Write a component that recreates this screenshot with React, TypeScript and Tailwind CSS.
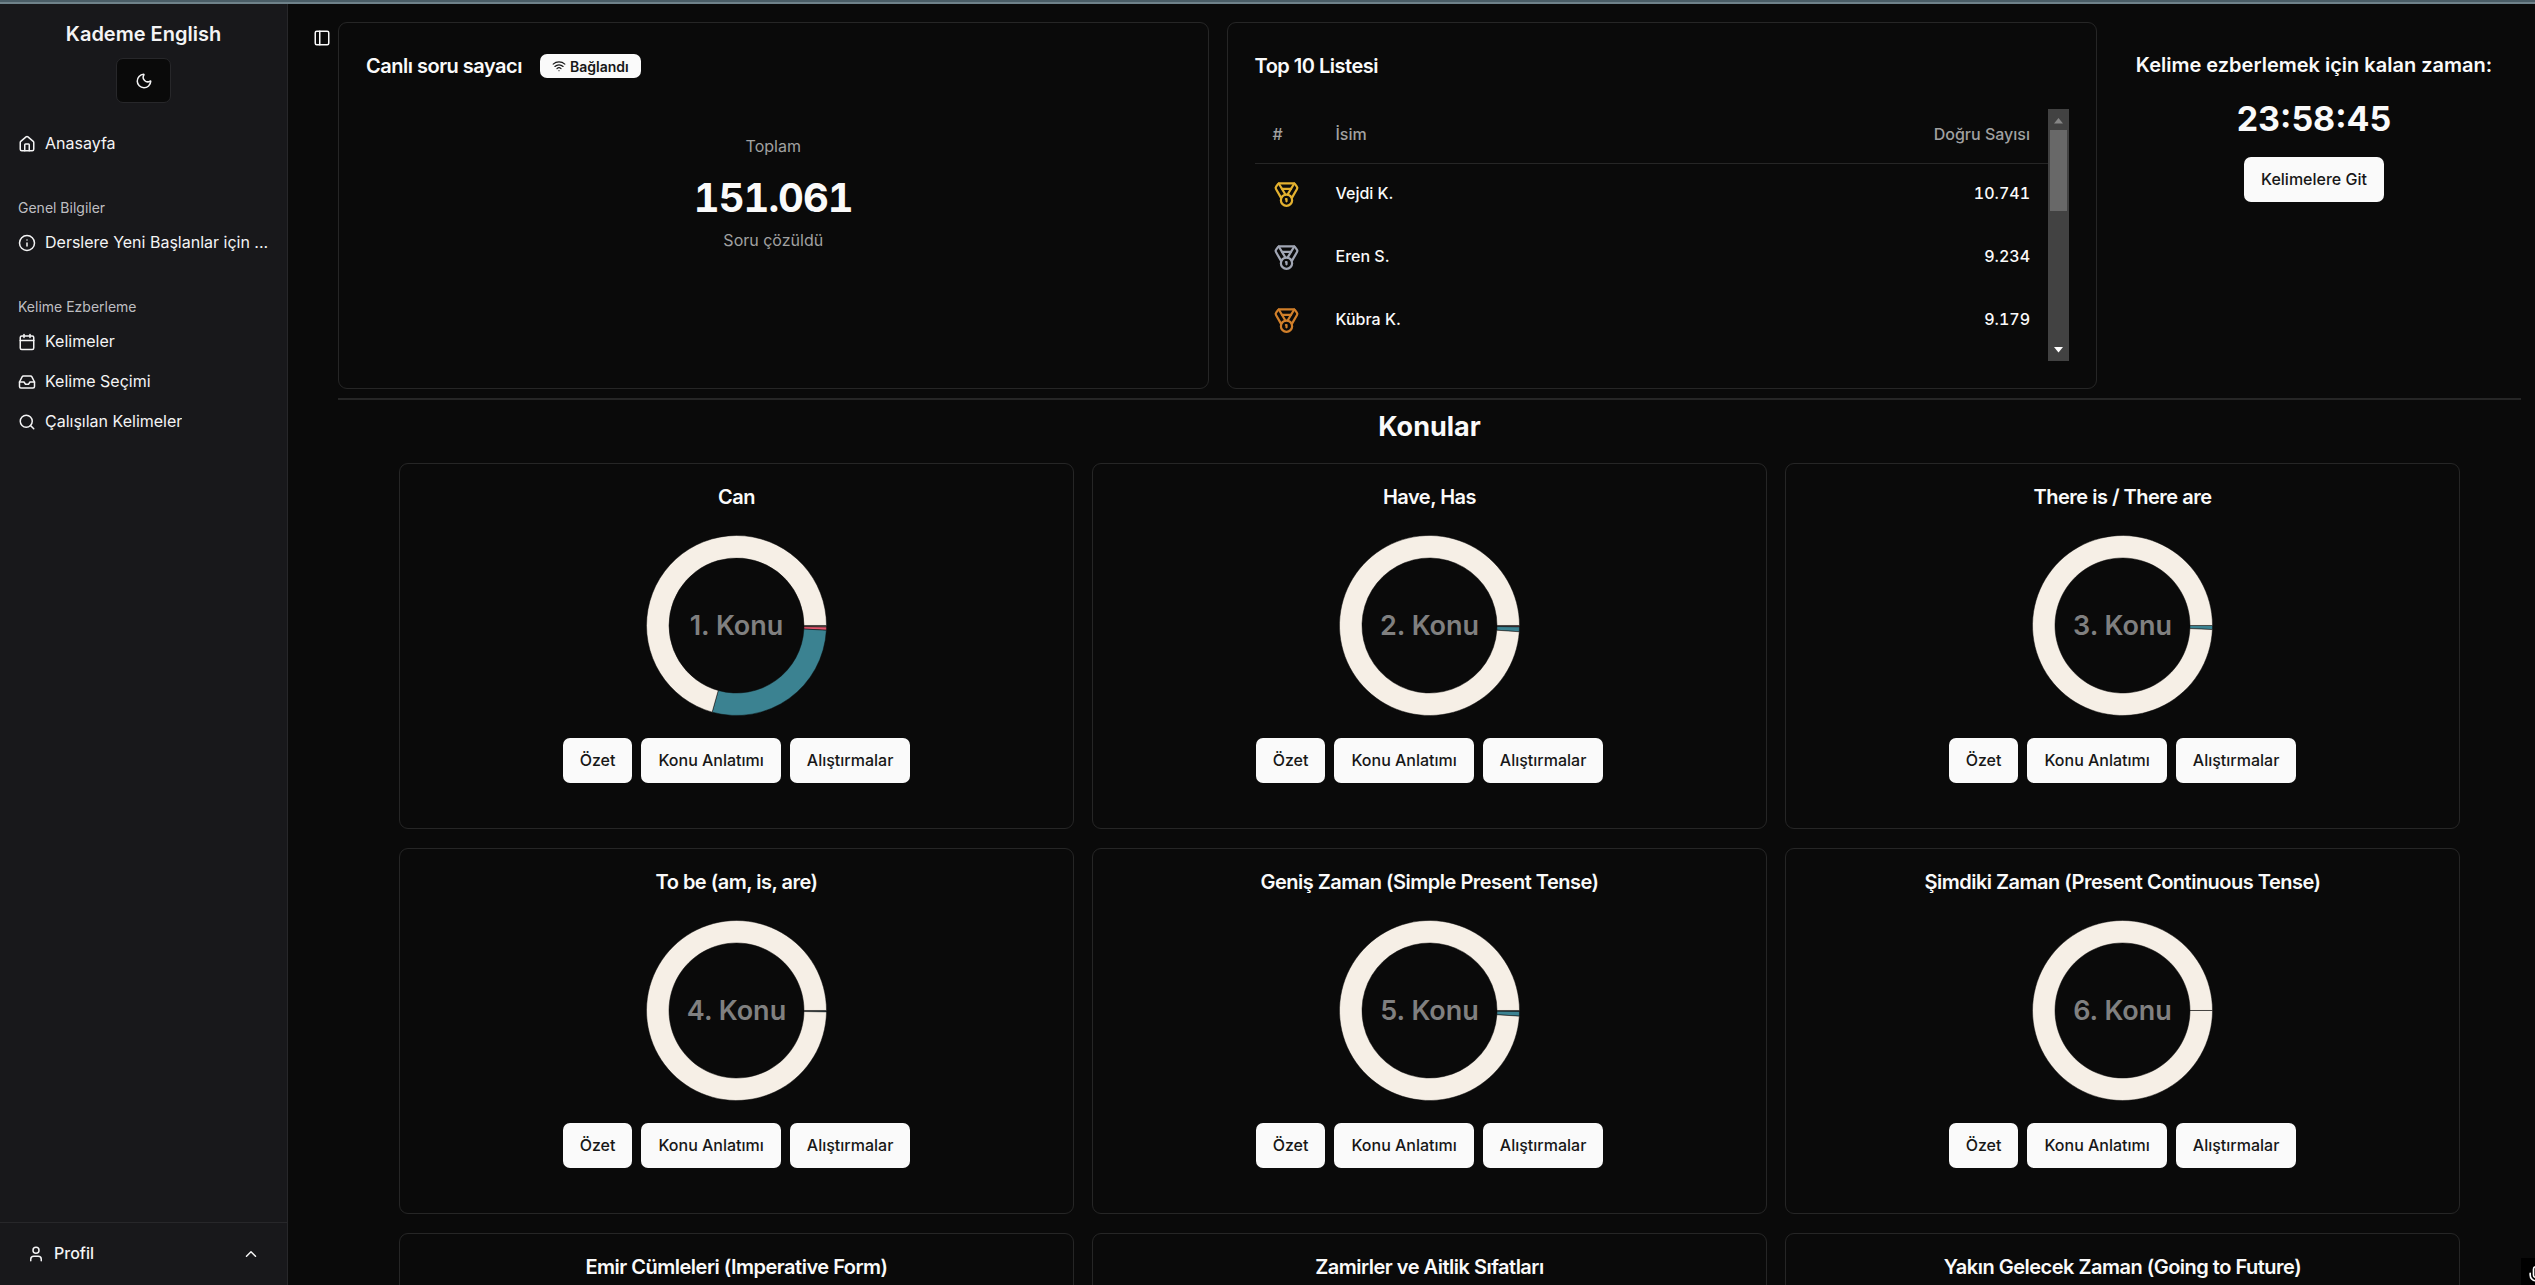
import React from 'react';
import {
  Calendar,
  ChevronUp,
  House,
  Inbox,
  Info,
  LucideIcon,
  Medal,
  Mic,
  Moon,
  PanelLeft,
  Search,
  User,
  Wifi,
} from 'lucide-react';

interface Slice {
  to: number; // end angle in degrees, clockwise from 3 o'clock
  color: string;
}

interface Topic {
  title: string;
  slices: Slice[];
}

interface MenuGroup {
  label?: string;
  items: { title: string; icon: LucideIcon }[];
}

const EMPTY = '#f6efe6';
const CORRECT = '#3b8291';
const WRONG = '#e4566e';

const topics: Topic[] = [
  {
    title: 'Can',
    slices: [
      { to: 1, color: '#75685f' },
      { to: 3, color: WRONG },
      { to: 105.7, color: CORRECT },
      { to: 360, color: EMPTY },
    ],
  },
  {
    title: 'Have, Has',
    slices: [
      { to: 0.9, color: '#7a4a4e' },
      { to: 4, color: CORRECT },
      { to: 360, color: EMPTY },
    ],
  },
  { title: 'There is / There are', slices: [{ to: 2.6, color: CORRECT }, { to: 360, color: EMPTY }] },
  { title: 'To be (am, is, are)', slices: [{ to: 0.9, color: '#35505a' }, { to: 360, color: EMPTY }] },
  {
    title: 'Geniş Zaman (Simple Present Tense)',
    slices: [
      { to: 0.6, color: '#55484a' },
      { to: 3.6, color: CORRECT },
      { to: 360, color: EMPTY },
    ],
  },
  { title: 'Şimdiki Zaman (Present Continuous Tense)', slices: [{ to: 360, color: EMPTY }] },
  { title: 'Emir Cümleleri (Imperative Form)', slices: [{ to: 360, color: EMPTY }] },
  { title: 'Zamirler ve Aitlik Sıfatları', slices: [{ to: 360, color: EMPTY }] },
  { title: 'Yakın Gelecek Zaman (Going to Future)', slices: [{ to: 360, color: EMPTY }] },
];

const menu: MenuGroup[] = [
  { items: [{ title: 'Anasayfa', icon: House }] },
  { label: 'Genel Bilgiler', items: [{ title: 'Derslere Yeni Başlanlar için ...', icon: Info }] },
  {
    label: 'Kelime Ezberleme',
    items: [
      { title: 'Kelimeler', icon: Calendar },
      { title: 'Kelime Seçimi', icon: Inbox },
      { title: 'Çalışılan Kelimeler', icon: Search },
    ],
  },
];

const leaders = [
  { name: 'Vejdi K.', score: '10.741', medal: 'text-[#e3b12f]' },
  { name: 'Eren S.', score: '9.234', medal: 'text-[#a1a6b4]' },
  { name: 'Kübra K.', score: '9.179', medal: 'text-[#d17f2a]' },
];

const OUTER = 90;
const INNER = 67.5;

const point = (radius: number, deg: number) => {
  const rad = (deg * Math.PI) / 180;
  return `${radius * Math.cos(rad)} ${radius * Math.sin(rad)}`;
};

const slicePath = (from: number, to: number) => {
  const end = Math.min(to, 359.99);
  const large = end - from > 180 ? 1 : 0;
  return `M${point(OUTER, from)} A${OUTER} ${OUTER} 0 ${large} 1 ${point(OUTER, end)} L${point(INNER, end)} A${INNER} ${INNER} 0 ${large} 0 ${point(INNER, from)} Z`;
};

const Donut: React.FC<{ slices: Slice[]; label: string }> = ({ slices, label }) => (
  <svg viewBox="-112.5 -112.5 225 225" className="size-[225px]" role="img" aria-label={label}>
    {slices.map((slice, i) => (
      <path
        key={slice.to}
        d={slicePath(i === 0 ? 0 : slices[i - 1].to, slice.to)}
        fill={slice.color}
        stroke="#0a0a0a"
        strokeWidth="0.5"
      />
    ))}
    <text
      x="0"
      y="0"
      dy="9"
      textAnchor="middle"
      className="fill-[#808080] text-[27px] font-semibold"
    >
      {label}
    </text>
  </svg>
);

const Button: React.FC<{ children: React.ReactNode }> = ({ children }) => (
  <button
    type="button"
    className="h-[45px] rounded-[7px] bg-neutral-50 px-[17px] pb-0.5 text-base font-medium text-neutral-900"
  >
    {children}
  </button>
);

const Sidebar = () => (
  <aside className="flex w-72 shrink-0 flex-col border-r border-zinc-800 bg-[#18181b] text-zinc-100">
    <div className="flex flex-col items-center gap-[9px] pt-[15px]">
      <h2 className="text-xl leading-[30px] font-semibold">Kademe English</h2>
      <button
        type="button"
        aria-label="Tema"
        className="flex h-[45px] w-[55px] items-center justify-center rounded-[7px] border border-zinc-800 bg-[#0a0a0a]"
      >
        <Moon className="size-[18px]" />
      </button>
    </div>

    <nav className="mt-[14px] flex flex-1 flex-col">
      {menu.map((group, i) => (
        <div key={i} className="flex flex-col p-[9px]">
          {group.label && (
            <span className="flex h-9 items-center px-[9px] text-[14px] text-zinc-300/90">
              {group.label}
            </span>
          )}
          <ul className="mb-[9px] flex flex-col gap-1">
            {group.items.map(({ title, icon: Icon }) => (
              <li key={title}>
                <a href="#" className="flex h-9 items-center gap-[9px] px-[9px] text-base">
                  <Icon className="size-[18px] shrink-0" />
                  <span className="truncate pb-[3px]">{title}</span>
                </a>
              </li>
            ))}
          </ul>
        </div>
      ))}
    </nav>

    <div className="border-t border-zinc-800 px-[27px] py-[13px]">
      <button type="button" className="flex h-9 w-full items-center gap-[9px] text-base font-medium">
        <User className="size-[18px]" />
        <span className="pb-[3px]">Profil</span>
        <ChevronUp className="ml-auto size-[18px]" />
      </button>
    </div>
  </aside>
);

const CounterCard = () => (
  <section className="flex flex-1 flex-col rounded-[9px] border border-neutral-800 p-[27px]">
    <div className="flex h-8 items-center gap-[18px]">
      <h3 className="text-xl font-semibold tracking-tight">Canlı soru sayacı</h3>
      <span className="flex h-6 items-center gap-1 rounded-[7px] bg-neutral-50 px-3 text-[14px] font-semibold text-neutral-900">
        <Wifi className="size-[14px]" />
        Bağlandı
      </span>
    </div>
    <div className="flex flex-col items-center pt-[52px]">
      <p className="text-base text-neutral-400">Toplam</p>
      <p className="mt-[17px] text-[40px] leading-[45px] font-bold tracking-tight tabular-nums">151.061</p>
      <p className="mt-2 text-base text-neutral-400">Soru çözüldü</p>
    </div>
  </section>
);

const LeaderCard = () => (
  <section className="flex flex-1 flex-col rounded-[9px] border border-neutral-800 p-[27px]">
    <h3 className="text-xl leading-8 font-semibold tracking-tight">Top 10 Listesi</h3>
    <div className="mt-[27px] flex h-[252px]">
      <div className="flex-1 overflow-hidden">
        <table className="w-full text-base">
          <thead>
            <tr className="h-[54px] border-b border-neutral-800 text-neutral-400">
              <th className="w-[63px] px-[18px] pb-1 text-left font-medium">#</th>
              <th className="px-[18px] pb-1 text-left font-medium">İsim</th>
              <th className="px-[18px] pb-1 text-right font-medium">Doğru Sayısı</th>
            </tr>
          </thead>
          <tbody>
            {leaders.map((leader) => (
              <tr key={leader.name} className="h-[63px] font-medium">
                <td className="px-[18px]">
                  <Medal className={`size-[27px] ${leader.medal}`} />
                </td>
                <td className="px-[18px] pb-[3px]">{leader.name}</td>
                <td className="px-[18px] pb-[3px] text-right tabular-nums">{leader.score}</td>
              </tr>
            ))}
          </tbody>
        </table>
      </div>
      {/* Scrollbar */}
      <div className="flex w-[21px] flex-col items-center bg-[#424242]">
        <svg viewBox="0 0 21 21" className="size-[21px] fill-[#868686]">
          <path d="M10.5 9 L15 14.5 H6 Z" />
        </svg>
        <div className="h-[81px] w-[17px] bg-[#686868]" />
        <svg viewBox="0 0 21 21" className="mt-auto size-[21px] fill-white">
          <path d="M10.5 12.5 L15 7 H6 Z" />
        </svg>
      </div>
    </div>
  </section>
);

const TimerPanel = () => (
  <section className="flex w-[398px] flex-col items-center gap-[18px] pt-[27px]">
    <h3 className="text-xl leading-8 font-semibold">Kelime ezberlemek için kalan zaman:</h3>
    <p className="text-[34px] leading-10 font-bold">23:58:45</p>
    <Button>Kelimelere Git</Button>
  </section>
);

const TopicCard: React.FC<{ topic: Topic; index: number }> = ({ topic, index }) => (
  <article className="flex flex-col items-center rounded-[9px] border border-neutral-800 pt-[18px] pb-[45px]">
    <h3 className="text-xl leading-[31px] font-semibold tracking-tight">{topic.title}</h3>
    <Donut slices={topic.slices} label={`${index + 1}. Konu`} />
    <div className="flex gap-[9px]">
      <Button>Özet</Button>
      <Button>Konu Anlatımı</Button>
      <Button>Alıştırmalar</Button>
    </div>
  </article>
);

export default function App() {
  return (
    <div className="relative flex h-screen flex-col overflow-hidden bg-[#0a0a0a] font-['Inter',sans-serif] text-neutral-50">
      <div className="h-1 shrink-0 border-t-2 border-[#4a5d66] bg-[#6f828a]" />
      <div className="flex min-h-0 flex-1">
        <Sidebar />
        <main className="flex flex-1 items-start overflow-y-auto pt-[18px] pr-[14px] pl-[18px] [scrollbar-width:none]">
          <button type="button" aria-label="Menü" className="flex size-8 items-center justify-center">
            <PanelLeft className="size-[18px]" />
          </button>
          <div className="flex-1">
            <div className="flex gap-[18px] pr-2">
              <CounterCard />
              <LeaderCard />
              <TimerPanel />
            </div>
            <hr className="mt-[9px] border-t-2 border-neutral-800" />
            <h1 className="mt-[9px] text-center text-[27px] leading-9 font-bold">Konular</h1>
            <div className="mt-[18px] grid grid-cols-3 gap-x-[18px] gap-y-[19px] px-[61px]">
              {topics.map((topic, i) => (
                <TopicCard key={topic.title} topic={topic} index={i} />
              ))}
            </div>
          </div>
        </main>
      </div>
      {/* Floating mic, mostly off the right edge */}
      <button
        type="button"
        aria-label="Mikrofon"
        className="absolute right-0 bottom-0 h-[27px] w-[14px] overflow-hidden bg-black pt-[6px] pl-[5px]"
      >
        <Mic className="size-5 max-w-none" />
      </button>
    </div>
  );
}
